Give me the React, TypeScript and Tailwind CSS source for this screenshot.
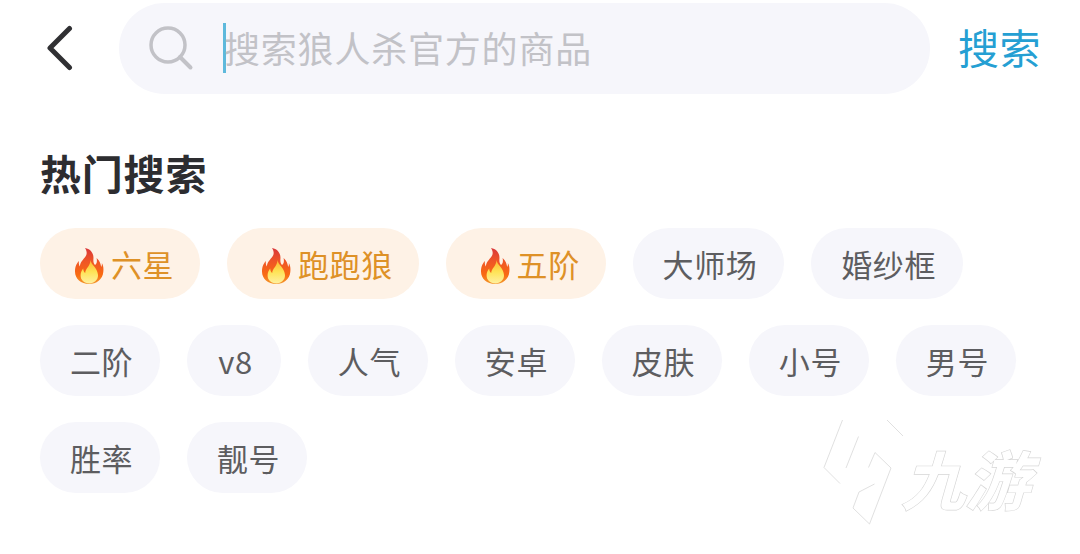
import clsx from 'clsx'

interface Tag {
  label: string
  hot?: boolean
}

const rows: Tag[][] = [
  [
    { label: '六星', hot: true },
    { label: '跑跑狼', hot: true },
    { label: '五阶', hot: true },
    { label: '大师场' },
    { label: '婚纱框' },
  ],
  [
    { label: '二阶' },
    { label: 'v8' },
    { label: '人气' },
    { label: '安卓' },
    { label: '皮肤' },
    { label: '小号' },
    { label: '男号' },
  ],
  [{ label: '胜率' }, { label: '靓号' }],
]

function Flame() {
  return (
    <svg viewBox="0 0 30 38" className="mt-[5px] mr-[7px] h-[38px] w-[30px] shrink-0">
      <defs>
        <linearGradient id="flameOuter" x1="0" y1="0" x2="0" y2="1">
          <stop offset="0%" stopColor="#d9363a" />
          <stop offset="35%" stopColor="#ee5427" />
          <stop offset="75%" stopColor="#f96b12" />
          <stop offset="100%" stopColor="#f39a2e" />
        </linearGradient>
        <linearGradient id="flameInner" x1="0" y1="0" x2="0" y2="1">
          <stop offset="0%" stopColor="#fdb62f" />
          <stop offset="50%" stopColor="#fee356" />
          <stop offset="100%" stopColor="#fff0a0" />
        </linearGradient>
      </defs>
      <path
        d="M11 1C17 2 20 7 19.4 12C19.2 15 19.8 17 21 18C23 17 23.2 14 22.6 11C26 14 26.6 17 27.2 20C28 18.500 28 17 27.800 16C29.600 19 29.600 22 29.300 25C28.600 32.500 22.500 37 15 37C7 37 1 32 1 24.500C1 19.500 2.500 17 4.800 14C4.700 16.500 5 18 5.800 19.500C6.500 14.500 9 13 11.500 9.500C13.300 7 13 4 11 1Z"
        fill="url(#flameOuter)"
      />
      <path
        d="M16.500 13C17 18 23.500 20.500 24 28C24.300 33 20 36.400 15.500 36.400C10 36.400 6.400 33 6.600 28C6.700 25 8 23 9.200 21.500C9.300 23.500 10 25 11.200 26C11.500 21 16.500 19 16.500 13Z"
        fill="url(#flameInner)"
      />
    </svg>
  )
}

function Chip({ label, hot }: Tag) {
  return (
    <div
      className={clsx(
        'flex h-[71px] min-w-[94px] items-center justify-center rounded-full text-[31px] tracking-[0.6px]',
        hot ? 'bg-[#fef2e6] pr-[26px] pl-[34px] text-[#de9127]' : 'bg-[#f6f6fb] pr-[27px] pl-[30px] text-[#5d5d60]',
      )}
    >
      {hot && <Flame />}
      <span className="leading-none">{label}</span>
    </div>
  )
}

function Watermark() {
  return (
    <div className="absolute top-[415px] left-[820px] h-[115px] w-[230px]">
      <svg viewBox="0 0 230 115" className="absolute inset-0 size-full" fill="none" stroke="#dcdcdc" strokeWidth="0.9">
        <path d="M22.500 5L4 52.500L20 68.500" />
        <path d="M38.500 21.500L26 53" />
        <path d="M67 5L83 21" />
        <path d="M48.500 52.500L55 37.500L71 53L49.500 109L33 93L39 77L54.500 69" />
      </svg>
      <div className="absolute top-[30px] left-[89px] -skew-x-[16deg] text-[64px] leading-none font-bold whitespace-nowrap text-white [-webkit-text-stroke:1.4px_#d6d6d6] [paint-order:stroke_fill]">
        九游
      </div>
    </div>
  )
}

export default function App() {
  return (
    <div className="relative h-[554px] w-[1080px] overflow-hidden bg-white font-['Noto_Sans_CJK_SC',sans-serif]">
      <header className="flex h-[94px] items-center pt-[3px]">
        <svg viewBox="0 0 28 46" className="-mt-[2px] ml-[46px] h-[46px] w-[28px] shrink-0" fill="none">
          <path d="M23.500 3.500L4 23L23.500 42.500" stroke="#303033" strokeWidth="5" strokeLinecap="round" strokeLinejoin="round" />
        </svg>
        <div className="ml-[45px] flex h-[91px] w-[811px] items-center rounded-full bg-[#f6f6fb]">
          <svg viewBox="0 0 46 46" className="-mt-[2px] ml-[29px] h-[46px] w-[46px]" fill="none" stroke="#c2c2c7" strokeWidth="3.500">
            <circle cx="20" cy="20" r="17" />
            <path d="M32 32L42.500 42.500" strokeWidth="4" strokeLinecap="round" />
          </svg>
          <div className="-mt-[2px] ml-[29px] h-[50px] w-[3px] bg-[#5eb9dc]" />
          <span className="-mt-[4px] -ml-[2px] text-[36px] leading-none tracking-[0.8px] text-[#c2c2c7]">搜索狼人杀官方的商品</span>
        </div>
        <button className="-mt-[4px] ml-[28px] text-[41px] leading-none tracking-[0.5px] whitespace-nowrap text-[#259fd3]">搜索</button>
      </header>

      <h2 className="mt-[57px] ml-[40px] text-[41px] leading-[42px] font-bold tracking-[0.8px] text-[#2d2d30]">热门搜索</h2>

      <div className="mt-[35px] ml-[40px] flex flex-col gap-[26px]">
        {rows.map((row, i) => (
          <div key={i} className="flex gap-[26.8px]">
            {row.map((tag) => (
              <Chip key={tag.label} {...tag} />
            ))}
          </div>
        ))}
      </div>

      <Watermark />
    </div>
  )
}
